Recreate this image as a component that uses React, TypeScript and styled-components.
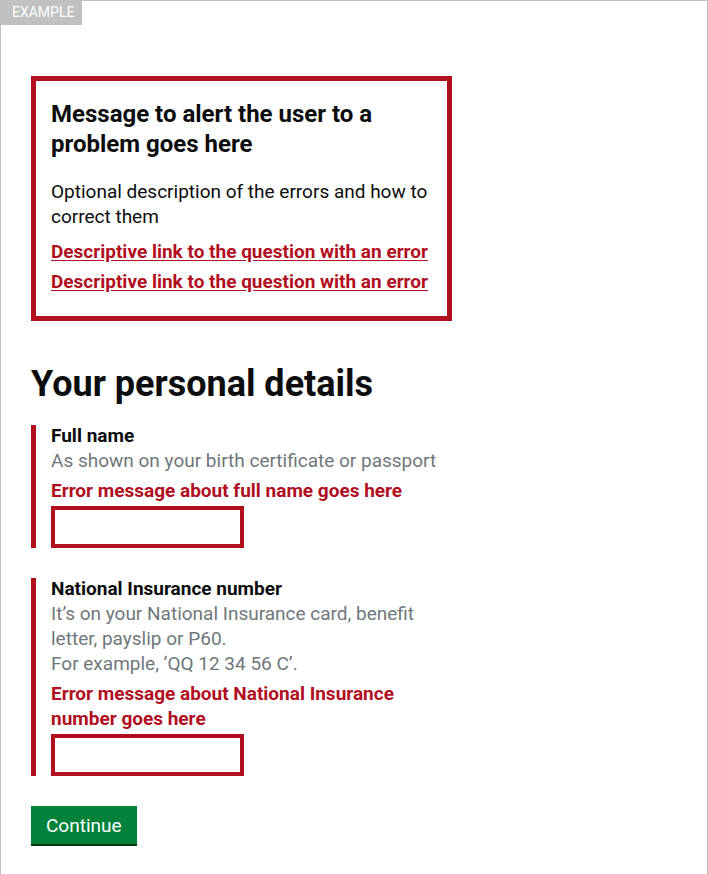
import React from "react";
import styled, { createGlobalStyle } from "styled-components";

const GlobalStyle = createGlobalStyle`
  html, body {
    margin: 0;
    padding: 0;
    background: #ffffff;
  }
  body {
    font-family: Roboto, "Liberation Sans", sans-serif;
    color: #0b0c0c;
    -webkit-font-smoothing: antialiased;
  }
  * { box-sizing: border-box; }
`;

const Frame = styled.div`
  position: relative;
  min-height: 100vh;
  border: 1px solid #bfc1c3;
  border-bottom: none;
  padding: 75px 30px 30px 30px;
`;

const Tag = styled.div`
  position: absolute;
  top: -1px;
  left: -1px;
  width: 82px;
  height: 25px;
  background: #bfc1c3;
  color: #ffffff;
  font-size: 14px;
  line-height: 25px;
  padding-left: 12px;
  text-transform: uppercase;
`;

const Column = styled.div`
  width: 421px;
`;

const ErrorSummary = styled.div`
  border: 5px solid #b10e1e;
  padding: 18px 15px 22px 15px;
  margin-bottom: 43px;
`;

const SummaryTitle = styled.h2`
  margin: 0 0 20px 0;
  font-size: 24px;
  line-height: 30px;
  font-weight: 700;
`;

const SummaryBody = styled.p`
  margin: 0 0 10px 0;
  font-size: 19px;
  line-height: 25px;
`;

const SummaryList = styled.ul`
  list-style: none;
  margin: 0;
  padding: 0;
  display: flex;
  flex-direction: column;
  gap: 5px;
`;

const ErrorLink = styled.a`
  font-size: 19px;
  line-height: 25px;
  font-weight: 700;
  color: #b10e1e;
  text-decoration: underline;
  text-underline-offset: 2px;
  white-space: nowrap;
`;

const PageHeading = styled.h1`
  margin: 0 0 21px 0;
  font-size: 36px;
  line-height: 40px;
  font-weight: 700;
  white-space: nowrap;
`;

const FormGroup = styled.div`
  border-left: 5px solid #b10e1e;
  padding-left: 15px;
  margin-bottom: 30px;
  display: flex;
  flex-direction: column;
  align-items: flex-start;
`;

const Label = styled.label`
  display: block;
  margin-top: -2px;
  font-size: 19px;
  line-height: 25px;
  font-weight: 700;
`;

const Hint = styled.span`
  display: block;
  font-size: 19px;
  line-height: 25px;
  color: #6f777b;
`;

const ErrorMessage = styled.span`
  display: block;
  margin-top: 5px;
  font-size: 19px;
  line-height: 25px;
  font-weight: 700;
  color: #b10e1e;
`;

const Input = styled.input`
  display: block;
  margin-top: 3px;
  width: 193px;
  height: 42px;
  border: 4px solid #b10e1e;
  border-radius: 0;
  padding: 4px;
  font-family: inherit;
  font-size: 19px;
  background: #ffffff;
  outline: none;
`;

const Button = styled.button`
  display: inline-block;
  margin: 0;
  border: none;
  border-radius: 0;
  background: #00823b;
  color: #ffffff;
  font-family: inherit;
  font-size: 19px;
  line-height: 25px;
  padding: 7px 15px 6px 15px;
  box-shadow: 0 2px 0 #003618;
  cursor: pointer;
`;

export default function App() {
  return (
    <>
      <GlobalStyle />
      <Frame>
        <Tag>Example</Tag>
        <Column>
          <ErrorSummary role="alert">
            <SummaryTitle>Message to alert the user to a problem goes here</SummaryTitle>
            <SummaryBody>Optional description of the errors and how to correct them</SummaryBody>
            <SummaryList>
              <li>
                <ErrorLink href="#full-name">Descriptive link to the question with an error</ErrorLink>
              </li>
              <li>
                <ErrorLink href="#ni-number">Descriptive link to the question with an error</ErrorLink>
              </li>
            </SummaryList>
          </ErrorSummary>

          <PageHeading>Your personal details</PageHeading>

          <FormGroup>
            <Label htmlFor="full-name">Full name</Label>
            <Hint>As shown on your birth certificate or passport</Hint>
            <ErrorMessage>Error message about full name goes here</ErrorMessage>
            <Input id="full-name" type="text" />
          </FormGroup>

          <FormGroup>
            <Label htmlFor="ni-number">National Insurance number</Label>
            <Hint>
              It’s on your National Insurance card, benefit
              <br />
              letter, payslip or P60.
              <br />
              For example, ‘QQ 12 34 56 C’.
            </Hint>
            <ErrorMessage>
              Error message about National Insurance
              <br />
              number goes here
            </ErrorMessage>
            <Input id="ni-number" type="text" />
          </FormGroup>

          <Button type="submit">Continue</Button>
        </Column>
      </Frame>
    </>
  );
}
